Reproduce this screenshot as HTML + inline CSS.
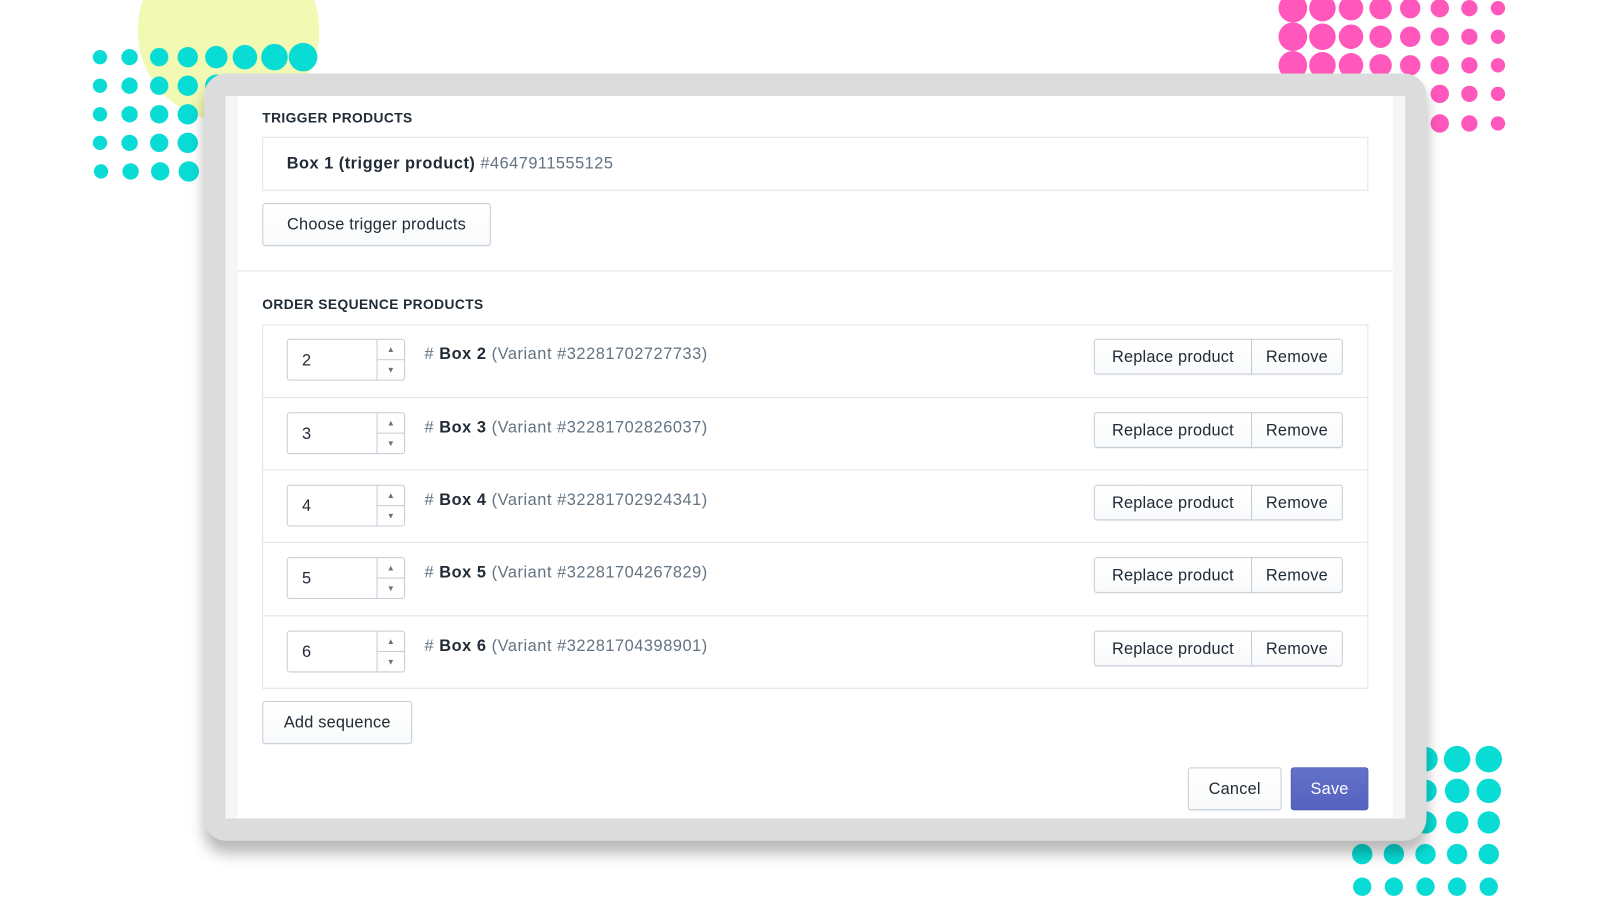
<!DOCTYPE html>
<html><head><meta charset="utf-8"><style>
html,body{margin:0;padding:0;width:1600px;height:900px;overflow:hidden;background:#fff;font-family:"Liberation Sans",Arial,sans-serif;}
#wrap{position:absolute;left:0;top:0;width:1568px;height:882px;transform:scale(1.0204);transform-origin:0 0;}
.abs{position:absolute;}
#frame{left:200px;top:72px;width:1198px;height:752px;background:#dcdcdc;border-radius:22px;box-shadow:0 12px 14px rgba(0,0,0,0.28);}
#inner{left:221px;top:94px;width:1156px;height:708px;background:#fff;}
.strip{background:#f4f6f8;top:94px;height:708px;width:12px;}
.title{font-size:13.5px;font-weight:bold;color:#212b36;letter-spacing:0.4px;}
.box{border:1px solid #dfe3e8;background:#fff;}
.btn{position:absolute;border:1px solid #c4cdd5;border-radius:3px;background:linear-gradient(#fff,#f9fafb);box-shadow:0 1px 0 rgba(22,29,37,0.05);font-size:16px;color:#212b36;display:flex;align-items:center;justify-content:center;box-sizing:border-box;padding-top:2px;letter-spacing:0.2px;}
.row{position:absolute;left:257px;width:1084px;height:71px;border-top:1px solid #dfe3e8;box-sizing:border-box;}
.inp{position:absolute;left:24px;top:14px;width:116px;height:41px;border:1px solid #c4cdd5;border-radius:3px;box-sizing:border-box;font-size:16px;color:#212b36;}
.inp span{position:absolute;left:14px;top:12px;}
.spin{position:absolute;right:0;top:0;width:26px;height:39px;border-left:1px solid #c4cdd5;}
.spin div{height:19px;display:flex;align-items:center;justify-content:center;font-size:8px;color:#637381;}
.spin div:first-child{border-bottom:1px solid #c4cdd5;}
.lbl{position:absolute;left:159px;top:21px;font-size:16px;color:#637381;letter-spacing:0.55px;}
.lbl b{color:#212b36;}
.grp{position:absolute;left:815px;top:14px;width:244px;height:35px;}
</style></head><body><div id="wrap">
<svg class="abs" style="left:0;top:0" width="1568" height="882">
<circle cx="224" cy="30" r="89" fill="#f2f9b3"/>
<g fill="#08dcd5">
<circle cx="98" cy="56" r="7"/><circle cx="127" cy="56" r="8"/><circle cx="156" cy="56" r="9"/><circle cx="184" cy="56" r="10"/><circle cx="212" cy="56" r="11"/><circle cx="240" cy="56" r="12"/><circle cx="269" cy="56" r="13"/><circle cx="297" cy="56" r="14"/>
<circle cx="98" cy="84" r="7"/><circle cx="127" cy="84" r="8"/><circle cx="156" cy="84" r="9"/><circle cx="184" cy="84" r="10"/><circle cx="212" cy="84" r="11"/>
<circle cx="98" cy="112" r="7"/><circle cx="127" cy="112" r="8"/><circle cx="156" cy="112" r="9"/><circle cx="184" cy="112" r="10"/>
<circle cx="98" cy="140" r="7"/><circle cx="127" cy="140" r="8"/><circle cx="156" cy="140" r="9"/><circle cx="184" cy="140" r="10"/>
<circle cx="99" cy="168" r="7"/><circle cx="128" cy="168" r="8"/><circle cx="157" cy="168" r="9"/><circle cx="185" cy="168" r="10"/>
<circle cx="1366" cy="744" r="11"/><circle cx="1397" cy="744" r="12"/><circle cx="1428" cy="744" r="13"/><circle cx="1459" cy="744" r="13"/>
<circle cx="1366" cy="775" r="11"/><circle cx="1397" cy="775" r="11"/><circle cx="1428" cy="775" r="12"/><circle cx="1459" cy="775" r="12"/>
<circle cx="1366" cy="806" r="10"/><circle cx="1397" cy="806" r="11"/><circle cx="1428" cy="806" r="11"/><circle cx="1459" cy="806" r="11"/>
<circle cx="1335" cy="837" r="10"/><circle cx="1366" cy="837" r="10"/><circle cx="1397" cy="837" r="10"/><circle cx="1428" cy="837" r="10"/><circle cx="1459" cy="837" r="10"/>
<circle cx="1335" cy="869" r="9"/><circle cx="1366" cy="869" r="9"/><circle cx="1397" cy="869" r="9"/><circle cx="1428" cy="869" r="9"/><circle cx="1459" cy="869" r="9"/>
</g>
<g fill="#ff57bb">
<circle cx="1267" cy="8" r="14"/><circle cx="1296" cy="8" r="13"/><circle cx="1324" cy="8" r="12"/><circle cx="1353" cy="8" r="11"/><circle cx="1382" cy="8" r="10"/><circle cx="1411" cy="8" r="9"/><circle cx="1440" cy="8" r="8"/><circle cx="1468" cy="8" r="7"/>
<circle cx="1267" cy="36" r="14"/><circle cx="1296" cy="36" r="13"/><circle cx="1324" cy="36" r="12"/><circle cx="1353" cy="36" r="11"/><circle cx="1382" cy="36" r="10"/><circle cx="1411" cy="36" r="9"/><circle cx="1440" cy="36" r="8"/><circle cx="1468" cy="36" r="7"/>
<circle cx="1267" cy="64" r="14"/><circle cx="1296" cy="64" r="13"/><circle cx="1324" cy="64" r="12"/><circle cx="1353" cy="64" r="11"/><circle cx="1382" cy="64" r="10"/><circle cx="1411" cy="64" r="9"/><circle cx="1440" cy="64" r="8"/><circle cx="1468" cy="64" r="7"/>
<circle cx="1382" cy="92" r="10"/><circle cx="1411" cy="92" r="9"/><circle cx="1440" cy="92" r="8"/><circle cx="1468" cy="92" r="7"/>
<circle cx="1382" cy="121" r="10"/><circle cx="1411" cy="121" r="9"/><circle cx="1440" cy="121" r="8"/><circle cx="1468" cy="121" r="7"/>
</g></svg>
<div id="frame" class="abs"></div>
<div id="inner" class="abs"></div>
<div class="abs strip" style="left:221px"></div>
<div class="abs strip" style="left:1365px"></div>
<div class="abs" style="left:233px;top:265px;width:1132px;height:1px;background:#dfe3e8"></div>

<div class="abs title" style="left:257px;top:108px">TRIGGER PRODUCTS</div>
<div class="abs box" style="left:257px;top:134px;width:1082px;height:51px;"></div>
<div class="abs" style="left:281px;top:152px;font-size:16px;color:#637381;letter-spacing:0.5px"><b style="color:#212b36">Box 1 (trigger product)</b> #4647911555125</div>
<div class="btn" style="left:257px;top:199px;width:224px;height:42px">Choose trigger products</div>

<div class="abs title" style="left:257px;top:291px">ORDER SEQUENCE PRODUCTS</div>
<div class="abs box" style="left:257px;top:318px;width:1082px;height:355px;"></div>

<div class="row" style="top:318px;border-top:none"><div class="inp"><span>2</span><div class="spin"><div>▲</div><div>▼</div></div></div><div class="lbl"># <b>Box 2</b> (Variant #32281702727733)</div><div class="grp"><div class="btn" style="left:0;top:0;width:155px;height:35px;border-radius:3px 0 0 3px">Replace product</div><div class="btn" style="left:154px;top:0;width:90px;height:35px;border-radius:0 3px 3px 0">Remove</div></div></div>
<div class="row" style="top:389px"><div class="inp"><span>3</span><div class="spin"><div>▲</div><div>▼</div></div></div><div class="lbl"># <b>Box 3</b> (Variant #32281702826037)</div><div class="grp"><div class="btn" style="left:0;top:0;width:155px;height:35px;border-radius:3px 0 0 3px">Replace product</div><div class="btn" style="left:154px;top:0;width:90px;height:35px;border-radius:0 3px 3px 0">Remove</div></div></div>
<div class="row" style="top:460px"><div class="inp"><span>4</span><div class="spin"><div>▲</div><div>▼</div></div></div><div class="lbl"># <b>Box 4</b> (Variant #32281702924341)</div><div class="grp"><div class="btn" style="left:0;top:0;width:155px;height:35px;border-radius:3px 0 0 3px">Replace product</div><div class="btn" style="left:154px;top:0;width:90px;height:35px;border-radius:0 3px 3px 0">Remove</div></div></div>
<div class="row" style="top:531px"><div class="inp"><span>5</span><div class="spin"><div>▲</div><div>▼</div></div></div><div class="lbl"># <b>Box 5</b> (Variant #32281704267829)</div><div class="grp"><div class="btn" style="left:0;top:0;width:155px;height:35px;border-radius:3px 0 0 3px">Replace product</div><div class="btn" style="left:154px;top:0;width:90px;height:35px;border-radius:0 3px 3px 0">Remove</div></div></div>
<div class="row" style="top:603px"><div class="inp"><span>6</span><div class="spin"><div>▲</div><div>▼</div></div></div><div class="lbl"># <b>Box 6</b> (Variant #32281704398901)</div><div class="grp"><div class="btn" style="left:0;top:0;width:155px;height:35px;border-radius:3px 0 0 3px">Replace product</div><div class="btn" style="left:154px;top:0;width:90px;height:35px;border-radius:0 3px 3px 0">Remove</div></div></div>

<div class="btn" style="left:257px;top:687px;width:147px;height:42px">Add sequence</div>
<div class="btn" style="left:1164px;top:752px;width:92px;height:42px">Cancel</div>
<div class="btn" style="left:1265px;top:752px;width:76px;height:42px;background:linear-gradient(#6371c7,#5563c1);border-color:#3f4eae;color:#fff">Save</div>
</div></body></html>
